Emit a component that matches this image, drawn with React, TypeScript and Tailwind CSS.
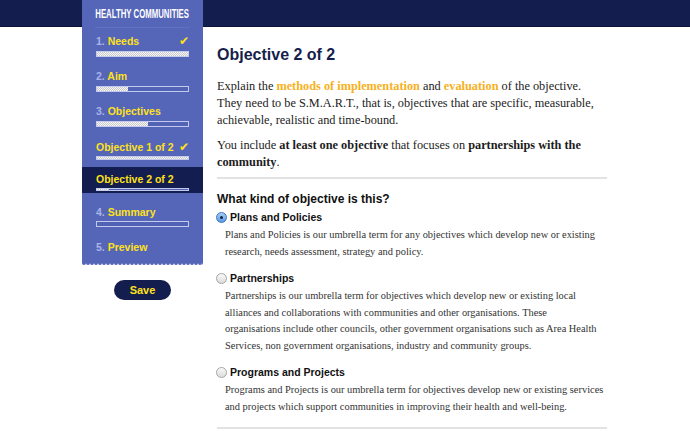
import React from 'react';

const sans = "font-['Liberation_Sans',Arial,sans-serif]";
const serif = "font-['Liberation_Serif',Georgia,serif]";

interface Step {
    num?: string;
    label: string;
    fill?: number;
    done?: boolean;
    box: string;
    barBox?: string;
}

const steps: Step[] = [
    { num: '1.', label: 'Needs', fill: 100, done: true, box: 'pt-[6px] pb-[12px]', barBox: 'mt-[3px] h-[6px]' },
    { num: '2.', label: 'Aim', fill: 34, box: 'pb-[12px]', barBox: 'mt-[3px] h-[6px]' },
    { num: '3.', label: 'Objectives', fill: 56, box: 'pb-[12px]', barBox: 'mt-[3px] h-[6px]' },
    { label: 'Objective 1 of 2', fill: 100, done: true, box: 'pt-[1px] pb-[7px]', barBox: 'mt-[2px] h-[4px]' },
    { label: 'Objective 2 of 2', fill: 13, box: 'pt-[5px] pb-[2px] bg-[#131d4f]', barBox: 'mt-[2px] h-[3px]' },
    { num: '4.', label: 'Summary', fill: 0, box: 'pt-[12px] pb-[13px]', barBox: 'mt-[2px] h-[6px]' },
    { num: '5.', label: 'Preview', box: 'pb-[8px]' },
];

const ProgressBar: React.FC<{ fill: number; className: string }> = ({ fill, className }) => (
    <div className={`${className} border border-[#c4caee] bg-[#5263b6]`}>
        <div
            className="h-full bg-[repeating-conic-gradient(#c9c9c9_0%_25%,#f6f6f6_0%_50%)] bg-size-[2px_2px]"
            style={{ width: `${fill}%` }}
        />
    </div>
);

const Sidebar: React.FC = () => (
    <div className="flex w-[121px] shrink-0 flex-col">
        <div className="flex flex-col bg-[#5566b8]">
            <div className="flex h-[27px] items-center justify-center">
                <span className={`${sans} inline-block scale-x-[0.6] text-[13px] font-bold whitespace-nowrap text-white`}>
                    HEALTHY COMMUNITIES
                </span>
            </div>
            <div className="mx-[13px] h-px bg-[#6070c2]" />
            {steps.map(step => (
                <div key={step.label} className={`px-[14px] ${step.box}`}>
                    <div className={`${sans} flex h-[14px] items-center justify-between text-[10.5px] leading-[14px] font-bold`}>
                        <span className="whitespace-nowrap">
                            {step.num && <span className="text-[#a9b3e7]">{step.num} </span>}
                            <span className="text-[#ffe11a]">{step.label}</span>
                        </span>
                        {step.done && (
                            <span className="font-['DejaVu_Sans',sans-serif] text-[12px] leading-[14px] text-[#ffe11a]">✔</span>
                        )}
                    </div>
                    {step.fill !== undefined && step.barBox && <ProgressBar fill={step.fill} className={step.barBox} />}
                </div>
            ))}
        </div>
        {/* scalloped bottom edge */}
        <svg width="121" height="3" className="block">
            <defs>
                <pattern id="scallop" width="4" height="3" patternUnits="userSpaceOnUse">
                    <path d="M0 0 H4 V1 A2 2 0 0 1 0 1 Z" fill="#5566b8" />
                </pattern>
            </defs>
            <rect width="121" height="3" fill="url(#scallop)" />
        </svg>
        <button
            className={`${sans} mt-[15px] h-[20px] w-[57px] self-center rounded-full bg-[#141e4e] text-[11px] font-bold text-[#ffe11a]`}
        >
            Save
        </button>
    </div>
);

interface Option {
    title: string;
    text: React.ReactNode;
    checked?: boolean;
}

const options: Option[] = [
    {
        title: 'Plans and Policies',
        text: 'Plans and Policies is our umbrella term for any objectives which develop new or existing research, needs assessment, strategy and policy.',
        checked: true,
    },
    {
        title: 'Partnerships',
        text: (
            <>
                Partnerships is our umbrella term for objectives which develop new or existing local alliances and
                collaborations with communities and other organisations. These
                <br />
                organisations include other councils, other government organisations such as Area Health Services, non
                government organisations, industry and community groups.
            </>
        ),
    },
    {
        title: 'Programs and Projects',
        text: 'Programs and Projects is our umbrella term for objectives develop new or existing services and projects which support communities in improving their health and well-being.',
    },
];

const Radio: React.FC<{ checked?: boolean }> = ({ checked }) =>
    checked ? (
        <span className="flex h-[11px] w-[11px] items-center justify-center rounded-full border border-[#3d74bf] bg-[linear-gradient(to_bottom,#a9cdf5,#5a9ae4)]">
            <span className="h-[3px] w-[3px] rounded-full bg-[#15223f]" />
        </span>
    ) : (
        <span className="h-[11px] w-[11px] rounded-full border border-[#a5a5a5] bg-[linear-gradient(to_bottom,#f9f9f9,#dcdcdc)]" />
    );

const App: React.FC = () => {
    return (
        <div className="min-h-[431px] w-full bg-[linear-gradient(to_bottom,#141e4e_0px,#141e4e_26px,#0b1336_26px,#0b1336_27px,#ffffff_27px)]">
            <div className="mx-auto flex w-[526px]">
                <Sidebar />
                <div className="ml-[14px] w-[390px] pt-[45px]">
                    <h1 className={`${sans} text-[16px] leading-[20px] font-bold text-[#161f4c]`}>Objective 2 of 2</h1>
                    <p className={`${serif} mt-[13px] text-[12.3px] leading-[17px] text-[#1c1c1c]`}>
                        Explain the <strong className="text-[#f6b11c]">methods of implementation</strong> and{' '}
                        <strong className="text-[#f6b11c]">evaluation</strong> of the objective. They need to be S.M.A.R.T., that
                        is, objectives that are specific, measurable, achievable, realistic and time-bound.
                    </p>
                    <p className={`${serif} mt-[8px] text-[12.3px] leading-[17px] text-[#1c1c1c]`}>
                        You include <strong>at least one objective</strong> that focuses on{' '}
                        <strong>partnerships with the community</strong>.
                    </p>
                    <div className="mt-[6px] h-[2px] bg-[#e2e2e2]" />
                    <h2 className={`${sans} mt-[12px] text-[12px] leading-[16px] font-bold text-[#111]`}>
                        What kind of objective is this?
                    </h2>
                    <div className="mt-[3px] flex flex-col gap-[11px]">
                        {options.map(opt => (
                            <div key={opt.title}>
                                <div className="-ml-[1px] flex h-[14px] items-center gap-[3px]">
                                    <Radio checked={opt.checked} />
                                    <span className={`${sans} text-[10.5px] leading-[14px] font-bold text-[#111]`}>{opt.title}</span>
                                </div>
                                <p className={`${serif} mt-[3px] pl-[8px] text-[10.4px] leading-[16.5px] text-[#333]`}>{opt.text}</p>
                            </div>
                        ))}
                    </div>
                    <div className="mt-[12px] h-[2px] bg-[#e2e2e2]" />
                </div>
            </div>
        </div>
    );
};

export default App;
